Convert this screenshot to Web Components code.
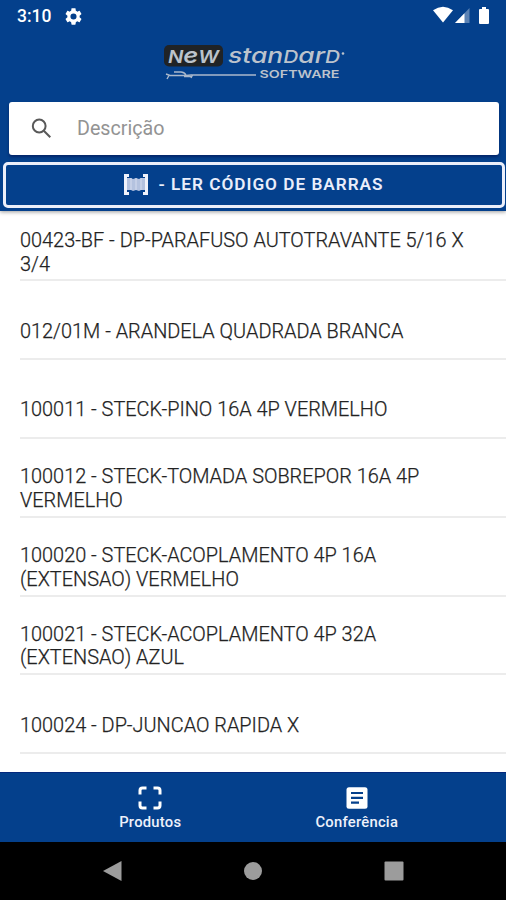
<!DOCTYPE html>
<html lang="pt-BR">
<head>
<meta charset="utf-8">
<meta name="viewport" content="width=device-width, initial-scale=1">
<title>New Standard Software</title>
<style>
    body {
        margin: 0;
        background: #fff;
        font-family: Roboto, "Liberation Sans", sans-serif;
    }
</style>
</head>
<body>
<app-shell>
    <status-bar slot="header"></status-bar>
    <brand-logo slot="header"></brand-logo>
    <search-box slot="header">Descrição</search-box>
    <scan-button slot="header">- LER CÓDIGO DE BARRAS</scan-button>

    <product-item>00423-BF - DP-PARAFUSO AUTOTRAVANTE 5/16 X 3/4</product-item>
    <product-item>012/01M - ARANDELA QUADRADA BRANCA</product-item>
    <product-item>100011 - STECK-PINO 16A 4P VERMELHO</product-item>
    <product-item>100012 - STECK-TOMADA SOBREPOR 16A 4P VERMELHO</product-item>
    <product-item>100020 - STECK-ACOPLAMENTO 4P 16A (EXTENSAO) VERMELHO</product-item>
    <product-item>100021 - STECK-ACOPLAMENTO 4P 32A (EXTENSAO) AZUL</product-item>
    <product-item>100024 - DP-JUNCAO RAPIDA X</product-item>

    <tab-bar slot="footer">
        <tab-item>
            <svg slot="icon" width="24" height="24" viewBox="0 0 24 24" fill="none" stroke="#fff" stroke-width="3">
                <path d="M2 8.500V4.500Q2 2 4.500 2H8.500M15.500 2H19.500Q22 2 22 4.500V8.500M22 15.500V19.500Q22 22 19.500 22H15.500M8.500 22H4.500Q2 22 2 19.500V15.500"/>
            </svg>
            Produtos
        </tab-item>
        <tab-item>
            <svg slot="icon" width="24" height="24" viewBox="0 0 24 24">
                <rect x="1.500" y="1.200" width="21" height="21.600" rx="2.500" fill="#fff"/>
                <path d="M6 7H18M6 11.800H18M6 16.600H14" stroke="#04408c" stroke-width="2.200"/>
            </svg>
            Conferência
        </tab-item>
    </tab-bar>
    <system-nav slot="footer"></system-nav>
</app-shell>

<script>
class AppShell extends HTMLElement {
    constructor() {
        super();
        this.attachShadow({ mode: 'open' });
        this.shadowRoot.innerHTML = `
            <style>
                :host {
                    display: flex;
                    flex-direction: column;
                    height: 900px;
                    overflow: hidden;
                }

                header {
                    flex: none;
                    height: 211px;
                    background: #04408c;
                    box-shadow: 0 1px 4px rgba(0, 0, 0, 0.4);
                    z-index: 1;
                }

                main {
                    flex: 1;
                    min-height: 0;
                    overflow: hidden;
                    margin-top: -8.400px;
                }

                footer {
                    flex: none;
                }
            </style>
            <header><slot name="header"></slot></header>
            <main><slot></slot></main>
            <footer><slot name="footer"></slot></footer>
        `;
    }
}

class StatusBar extends HTMLElement {
    constructor() {
        super();
        this.attachShadow({ mode: 'open' });
        this.shadowRoot.innerHTML = `
            <style>
                :host {
                    display: flex;
                    align-items: center;
                    height: 32px;
                    padding: 0 15px 0 17px;
                    box-sizing: border-box;
                    color: #fff;
                    font-size: 17.500px;
                    font-weight: 500;
                }

                .gear {
                    margin-left: 14px;
                }

                .icons {
                    margin-left: auto;
                }

                svg {
                    display: block;
                }
            </style>
            <span>3:10</span>
            <svg class="gear" width="17" height="17" viewBox="2 2 20 20" fill="#fff">
                <path d="M19.140 12.940c.04-.3.060-.61.060-.94s-.02-.64-.07-.94l2.030-1.580c.18-.14.230-.41.120-.61l-1.920-3.320c-.12-.22-.37-.29-.59-.22l-2.390.960c-.5-.38-1.030-.7-1.620-.94l-.36-2.540c-.04-.24-.24-.41-.48-.41h-3.840c-.24 0-.43.170-.47.410l-.36 2.540c-.59.240-1.130.570-1.620.940l-2.390-.96c-.22-.08-.47 0-.59.220L2.740 8.870c-.12.210-.08.470.120.610l2.030 1.580c-.05.3-.09.630-.09.940s.02.640.070.940l-2.030 1.580c-.18.140-.23.410-.12.610l1.920 3.320c.12.220.370.290.590.220l2.390-.96c.5.380 1.030.7 1.620.940l.36 2.540c.05.240.240.410.480.410h3.840c.24 0 .44-.17.470-.41l.36-2.540c.59-.24 1.130-.56 1.620-.94l2.390.960c.22.080.470 0 .59-.22l1.920-3.320c.12-.22.070-.47-.12-.61zM12 15.600a3.600 3.600 0 1 1 0-7.200 3.600 3.600 0 0 1 0 7.200z"/>
            </svg>
            <svg class="icons" width="58" height="20" viewBox="0 0 58 20" fill="#fff">
                <path d="M0 4.300Q10-2.800 20 4.300L10 16.500z"/>
                <path d="M36.500 2V17H22z" fill-opacity="0.350"/>
                <path d="M31.500 7.200V17H22z"/>
                <path d="M49 1h4v2h2q1 0 1 1v13q0 1-1 1h-8q-1 0-1-1V4q0-1 1-1H49z"/>
            </svg>
        `;
    }
}

class BrandLogo extends HTMLElement {
    constructor() {
        super();
        this.attachShadow({ mode: 'open' });
        this.shadowRoot.innerHTML = `
            <style>
                :host {
                    display: flex;
                    justify-content: center;
                    height: 70px;
                    padding-top: 8px;
                    box-sizing: border-box;
                }

                text {
                    font-family: Inter, Roboto, sans-serif;
                    fill: #bcc3cc;
                }

                /* capitals drawn at the x-height of the small letters */
                .cap {
                    font-size: 17px;
                }
            </style>
            <svg width="190" height="44" viewBox="0 0 190 44">
                <rect x="6" y="5" width="59" height="21.500" rx="5" fill="#202326"/>
                <text x="10" y="22.500" font-size="21.500" font-weight="600" font-style="italic" textLength="51" lengthAdjust="spacingAndGlyphs"><tspan class="cap">N</tspan>e<tspan class="cap">W</tspan></text>
                <text x="70" y="22.500" font-size="21.500" font-weight="500" font-style="italic" textLength="112" lengthAdjust="spacingAndGlyphs">stan<tspan class="cap">D</tspan>ar<tspan class="cap">D</tspan></text>
                <circle cx="185" cy="13.500" r="1.300" fill="#bcc3cc"/>
                <g fill="none" stroke="#aab8cb" stroke-width="1.400">
                    <path d="M8 34l4 1.500h16l5-.5H98"/>
                    <path d="M16 32h7q3 0 5 3M9 39l2-3.500M33 38l1.500-3M26 36.500h8"/>
                </g>
                <text x="101.500" y="38" font-size="10.500" font-weight="600" textLength="80" lengthAdjust="spacingAndGlyphs">SOFTWARE</text>
            </svg>
        `;
    }
}

class SearchBox extends HTMLElement {
    constructor() {
        super();
        this.attachShadow({ mode: 'open' });
        this.shadowRoot.innerHTML = `
            <style>
                :host {
                    display: flex;
                    align-items: center;
                    height: 53px;
                    margin: 0 7px 0 9px;
                    padding-left: 21px;
                    box-sizing: border-box;
                    background: #fff;
                    border-radius: 3px;
                    box-shadow: 0 2px 3px rgba(0, 0, 60, 0.450);
                    color: #939393;
                    font-size: 19.700px;
                }

                svg {
                    margin-right: 23px;
                }

                span {
                    margin-bottom: 1px;
                }
            </style>
            <svg width="24" height="24" viewBox="0 0 24 24" fill="none" stroke="#595959" stroke-width="2">
                <circle cx="9.200" cy="9" r="6.400"/>
                <path d="M13.800 13.700L20.300 20.200"/>
            </svg>
            <span><slot></slot></span>
        `;
    }
}

class ScanButton extends HTMLElement {
    constructor() {
        super();
        this.attachShadow({ mode: 'open' });
        this.shadowRoot.innerHTML = `
            <style>
                :host {
                    display: flex;
                    align-items: center;
                    justify-content: center;
                    height: 46px;
                    margin: 7px 1px 0 3px;
                    padding: 0 1px 2px 0;
                    box-sizing: border-box;
                    border: 3px solid #eceffa;
                    border-radius: 5px;
                    color: #eaeefb;
                    font-size: 17.200px;
                    font-weight: 600;
                    letter-spacing: 1px;
                }

                svg {
                    margin-right: 9px;
                }
            </style>
            <svg width="26" height="22" viewBox="0 0 26 22">
                <path d="M4 5h4l2 1 3-1 3 1 2-1h4v12h-4l-2 1-3-1-3 1-2-1H4z" fill="#b4c2df"/>
                <path d="M8 5v12M13 5v12M18 5v12" stroke="#d5dcef" stroke-width="1"/>
                <path d="M6 2.500H2.500V20.500H6M20 2.500h3.500V20.500H20" fill="none" stroke="#f0f2fb" stroke-width="3"/>
            </svg>
            <span><slot></slot></span>
        `;
    }
}

class ProductItem extends HTMLElement {
    constructor() {
        super();
        this.attachShadow({ mode: 'open' });
        this.shadowRoot.innerHTML = `
            <style>
                :host {
                    display: flex;
                    align-items: center;
                    height: 78.800px;
                    margin-left: 20px;
                    padding: 23px 40px 0 0;
                    box-sizing: border-box;
                    border-bottom: 2px solid #ececec;
                    color: #222;
                    font-size: 19.900px;
                    font-weight: 300;
                    line-height: 23.400px;
                    -webkit-text-stroke: 0.250px #222;
                }
            </style>
            <span><slot></slot></span>
        `;
    }
}

class TabBar extends HTMLElement {
    constructor() {
        super();
        this.attachShadow({ mode: 'open' });
        this.shadowRoot.innerHTML = `
            <style>
                :host {
                    display: flex;
                    justify-content: center;
                    height: 70px;
                    padding-left: 1px;
                    background: #04408c;
                    border-top: 1px solid #04287c;
                    box-sizing: border-box;
                }
            </style>
            <slot></slot>
        `;
    }
}

class TabItem extends HTMLElement {
    constructor() {
        super();
        this.attachShadow({ mode: 'open' });
        this.shadowRoot.innerHTML = `
            <style>
                :host {
                    display: flex;
                    flex-direction: column;
                    align-items: center;
                    width: 206.500px;
                    padding-top: 13px;
                    color: #eef1fb;
                    font-size: 14.800px;
                    font-weight: 500;
                    letter-spacing: 0.250px;
                    line-height: 18px;
                }

                span {
                    margin-top: 3px;
                }
            </style>
            <slot name="icon"></slot>
            <span><slot></slot></span>
        `;
    }
}

class SystemNav extends HTMLElement {
    constructor() {
        super();
        this.attachShadow({ mode: 'open' });
        this.shadowRoot.innerHTML = `
            <style>
                :host {
                    display: flex;
                    align-items: center;
                    justify-content: space-between;
                    height: 58px;
                    padding: 0 102px;
                    box-sizing: border-box;
                    background: #000;
                }
            </style>
            <svg width="20" height="22" viewBox="0 0 20 22" fill="#9c9c9c"><path d="M1 11L19.500 1V21z"/></svg>
            <svg width="20" height="20" viewBox="0 0 20 20" fill="#9c9c9c"><circle cx="10" cy="10" r="9"/></svg>
            <svg width="20" height="20" viewBox="0 0 20 20" fill="#9c9c9c"><rect x="0.500" y="0.500" width="19" height="19" rx="1"/></svg>
        `;
    }
}

customElements.define('app-shell', AppShell);
customElements.define('status-bar', StatusBar);
customElements.define('brand-logo', BrandLogo);
customElements.define('search-box', SearchBox);
customElements.define('scan-button', ScanButton);
customElements.define('product-item', ProductItem);
customElements.define('tab-bar', TabBar);
customElements.define('tab-item', TabItem);
customElements.define('system-nav', SystemNav);
</script>
</body>
</html>
